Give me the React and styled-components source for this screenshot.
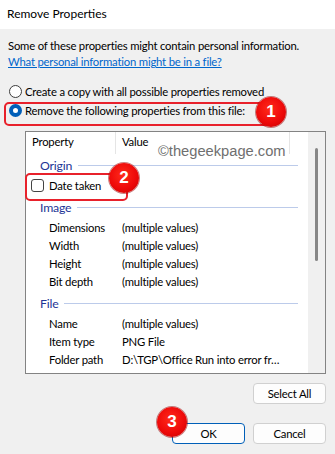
import React from 'react';
import styled, { createGlobalStyle } from 'styled-components';

const Global = createGlobalStyle`
  html, body { margin: 0; padding: 0; background: #f0f0f0; }
  body {
    font-family: Lato, "Liberation Sans", sans-serif;
    font-size: 11.3px;
    letter-spacing: -0.2px;
    color: #000;
  }
`

const Window = styled.div`
  position: relative;
  width: 335px;
  height: 454px;
  background: #f0f0f0;
  overflow: hidden;
`
const TitleBar = styled.div`
  height: 29px;
  background: #fff;
  padding-left: 7px;
  line-height: 27px;
  font-size: 12px;
  letter-spacing: 0;
`
const Body = styled.div`
  padding: 9px 9px 0 8px;
`
const Line = styled.div`
  height: 16px;
  line-height: 16px;
  white-space: nowrap;
`
const Link = styled.a`
  color: #0066cc;
  text-decoration: underline;
`
const Radios = styled.div`
  margin-top: 13px;
  display: flex;
  flex-direction: column;
  gap: 3px;
`
const RadioRow = styled.label`
  display: flex;
  align-items: center;
  height: 16px;
  gap: 3px;
  padding-left: 1px;
`
const RadioDot = styled.span`
  box-sizing: border-box;
  width: 13px;
  height: 13px;
  border-radius: 50%;
  border: ${p => (p.$on ? '4px solid #005fb8' : '1px solid #3c3c3c')};
  background: #fff;
`
const ListBox = styled.div`
  margin: 13px 0 0 17px;
  height: 241px;
  border: 1px solid #838383;
  background: #fff;
  display: flex;
`
const ListContent = styled.div`
  flex: 1;
  display: flex;
  flex-direction: column;
`
const Header = styled.div`
  height: 22px;
  display: grid;
  grid-template-columns: 90px 174px 1fr;
`
const HeaderCell = styled.div`
  padding-left: 6px;
  line-height: 20px;
  border-right: ${p => (p.$last ? 'none' : '1px solid #e5e5e5')};
`
const Group = styled.div`
  margin-bottom: 2px;
`
const GroupTitle = styled.div`
  display: flex;
  align-items: center;
  height: 22px;
  padding: 0 10px 0 14px;
  color: #1e3596;
  font-size: 12.3px;
  &::after {
    content: '';
    flex: 1;
    height: 1px;
    margin-left: 6px;
    background: #bccbea;
  }
`
const Item = styled.div`
  display: grid;
  grid-template-columns: 23px 73px 1fr;
  align-items: center;
  height: 18px;
  white-space: nowrap;
`
const Check = styled.span`
  box-sizing: border-box;
  justify-self: end;
  margin-right: 5px;
  width: 13px;
  height: 13px;
  border: 1px solid #444;
  border-radius: 3px;
  background: #fff;
`
const Scrollbar = styled.div`
  width: 17px;
  background: #f0f0f0;
  padding-top: 16px;
  display: flex;
  justify-content: center;
`
const Thumb = styled.div`
  width: 3px;
  height: 113px;
  border-radius: 2px;
  background: #868686;
`
const ButtonRow = styled.div`
  display: flex;
  justify-content: flex-end;
  gap: 8px;
  margin-top: ${p => p.$top}px;
`
const Button = styled.button`
  box-sizing: border-box;
  width: 73px;
  height: 21px;
  padding: 0;
  font: inherit;
  letter-spacing: inherit;
  color: #000;
  background: #fdfdfd;
  border: 1px solid ${p => (p.$primary ? '#005fb8' : '#d0d0d0')};
  border-radius: 4px;
`
const Watermark = styled.div`
  position: absolute;
  left: 158px;
  top: 143px;
  font-family: "Liberation Sans", Arial, sans-serif;
  font-size: 14.7px;
  letter-spacing: 0;
  color: #6f6f6f;
`
const Highlight = styled.div`
  position: absolute;
  box-sizing: border-box;
  border: 2px solid #e8212b;
  border-radius: 5px;
`
const Badge = styled.div`
  position: absolute;
  width: 30px;
  height: 30px;
  margin: -15px 0 0 -15px;
  border-radius: 50%;
  background: radial-gradient(circle at 45% 40%, #ff2a1a 0%, #ee0a0a 55%, #c40000 100%);
  box-shadow: 0 0 0 1px rgba(150, 0, 0, 0.5);
  color: #fff;
  font-family: "Liberation Sans", Arial, sans-serif;
  font-size: 17px;
  font-weight: 700;
  letter-spacing: 0;
  line-height: 30px;
  text-align: center;
`

const groups = [
  { title: 'Origin', items: [{ label: 'Date taken', check: true }] },
  {
    title: 'Image',
    items: [
      { label: 'Dimensions', value: '(multiple values)' },
      { label: 'Width', value: '(multiple values)' },
      { label: 'Height', value: '(multiple values)' },
      { label: 'Bit depth', value: '(multiple values)' },
    ],
  },
  {
    title: 'File',
    items: [
      { label: 'Name', value: '(multiple values)' },
      { label: 'Item type', value: 'PNG File' },
      { label: 'Folder path', value: 'D:\\TGP\\Office Run into error fr…' },
    ],
  },
]

export default function App() {
  return (
    <Window>
      <Global />
      <TitleBar>Remove Properties</TitleBar>
      <Body>
        <Line>Some of these properties might contain personal information.</Line>
        <Line><Link>What personal information might be in a file?</Link></Line>
        <Radios>
          <RadioRow><RadioDot />Create a copy with all possible properties removed</RadioRow>
          <RadioRow><RadioDot $on />Remove the following properties from this file:</RadioRow>
        </Radios>
        <ListBox>
          <ListContent>
            <Header>
              <HeaderCell>Property</HeaderCell>
              <HeaderCell>Value</HeaderCell>
              <HeaderCell $last />
            </Header>
            {groups.map(g => (
              <Group key={g.title}>
                <GroupTitle>{g.title}</GroupTitle>
                {g.items.map(it => (
                  <Item key={it.label}>
                    {it.check ? <Check /> : <span />}
                    <span>{it.label}</span>
                    <span>{it.value}</span>
                  </Item>
                ))}
              </Group>
            ))}
          </ListContent>
          <Scrollbar><Thumb /></Scrollbar>
        </ListBox>
        <ButtonRow $top={9}><Button>Select All</Button></ButtonRow>
        <ButtonRow $top={19}>
          <Button $primary>OK</Button>
          <Button>Cancel</Button>
        </ButtonRow>
      </Body>
      <Watermark>©thegeekpage.com</Watermark>
      <Highlight style={{ left: 4, top: 102, width: 266, height: 24 }} />
      <Highlight style={{ left: 25, top: 173, width: 103, height: 28 }} />
      <Badge style={{ left: 271, top: 112 }}>1</Badge>
      <Badge style={{ left: 124, top: 178 }}>2</Badge>
      <Badge style={{ left: 172, top: 422 }}>3</Badge>
    </Window>
  );
}
